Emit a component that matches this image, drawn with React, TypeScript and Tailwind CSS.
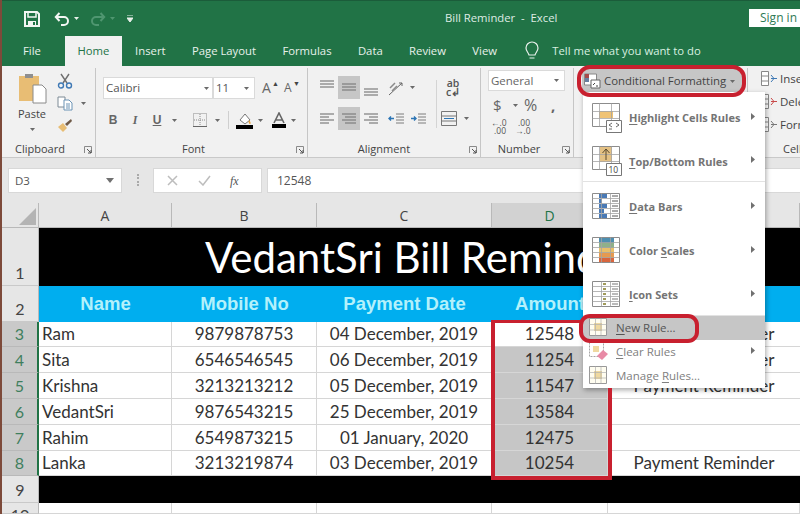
import type { ReactNode } from "react";

const ui = "font-['Open_Sans',sans-serif]";
const sheetFont = "font-['Lato',sans-serif]";

const people = [
  { row: 3, name: "Ram", mobile: "9879878753", date: "04 December, 2019", amount: "12548", note: "Payment Reminder" },
  { row: 4, name: "Sita", mobile: "6546546545", date: "06 December, 2019", amount: "11254", note: "Payment Reminder" },
  { row: 5, name: "Krishna", mobile: "3213213212", date: "05 December, 2019", amount: "11547", note: "Payment Reminder" },
  { row: 6, name: "VedantSri", mobile: "9876543215", date: "25 December, 2019", amount: "13584", note: "" },
  { row: 7, name: "Rahim", mobile: "6549873215", date: "01 January, 2020", amount: "12475", note: "" },
  { row: 8, name: "Lanka", mobile: "3213219874", date: "03 December, 2019", amount: "10254", note: "Payment Reminder" },
];

function Caret({ className = "" }: { className?: string }) {
  return (
    <svg width="5" height="3" viewBox="0 0 5 3" className={`shrink-0 ${className}`}>
      <path d="M0 0h5L2.5 3z" fill="#6a6a6a" />
    </svg>
  );
}

function Chevron() {
  return (
    <svg width="4" height="7" viewBox="0 0 4 7" className="shrink-0 -mt-[4px]">
      <path d="M0 0l4 3.5L0 7z" fill="#707070" />
    </svg>
  );
}

function Expander({ className = "" }: { className?: string }) {
  return (
    <svg width="8" height="8" viewBox="0 0 8 8" className={className}>
      <path d="M.5 7V.5H7.5V7" fill="none" stroke="#8a8a8a" />
      <path d="M3 3l4 4M7 4v3H4" fill="none" stroke="#555" />
    </svg>
  );
}

function Lines({ offs, selected = false, className = "" }: { offs: number[]; selected?: boolean; className?: string }) {
  // the alignment buttons are only a few grey strokes
  return (
    <div className={`flex items-center justify-center w-[22px] h-[23px] ${selected ? "bg-[#c6c6c6]" : ""}`}>
      <svg width="14" height="14" viewBox="0 0 14 14" className={className}>
        {offs.map((o, i) => (
          <path key={i} d={`M${o < 0 ? 0 : o} ${i * 3 + 2}H${o < 0 ? 14 + o : 14}`} stroke="#7c7c7c" strokeWidth="1.2" />
        ))}
      </svg>
    </div>
  );
}

function TitleBar() {
  return (
    <div className="h-[36px] bg-[#217346] border-t border-[#1b5c3a] flex items-center pl-[22px] relative">
      <svg width="16" height="16" viewBox="0 0 16 16">
        <path d="M1 1h12l2 2v12H1z" fill="none" stroke="#f2f6f3" strokeWidth="2" />
        <path d="M4 1h8v5H4z" fill="none" stroke="#f2f6f3" strokeWidth="1.5" />
        <path d="M4 10h8v5H4z" fill="#f2f6f3" />
        <path d="M9 11h2v3H9z" fill="#217346" />
      </svg>
      <svg width="16" height="14" viewBox="0 0 16 14" className="ml-[14px]">
        <path d="M2 5h8a4 4 0 0 1 0 8H7M5.5 1L1.8 5l3.7 4" fill="none" stroke="#f2f6f3" strokeWidth="2" />
      </svg>
      <svg width="5" height="3" viewBox="0 0 5 3" className="ml-[4px]">
        <path d="M0 0h5L2.5 3z" fill="#e8f0ea" />
      </svg>
      <svg width="16" height="14" viewBox="0 0 16 14" className="ml-[11px]">
        <path d="M14 5H6a4 4 0 0 0 0 8h3M10.5 1l3.7 4-3.700 4" fill="none" stroke="#4f9670" strokeWidth="2" />
      </svg>
      <svg width="5" height="3" viewBox="0 0 5 3" className="ml-[4px]">
        <path d="M0 0h5L2.5 3z" fill="#4f9670" />
      </svg>
      <svg width="6" height="7" viewBox="0 0 6 7" className="ml-[12px]">
        <path d="M0 0h6M0 3h6L3 7z" stroke="#e8f0ea" fill="#e8f0ea" />
      </svg>
      <span className={`${ui} ml-[312px] text-[11.3px] text-[#dfece4] whitespace-pre`}>Bill Reminder  -  Excel</span>
      <div className={`${ui} absolute right-0 top-[8px] w-[51px] h-[18px] bg-white text-[#2f7a55] text-[12px] leading-[18px] pl-[11px]`}>
        Sign in
      </div>
    </div>
  );
}

function Tabs() {
  const tabs = ["Insert", "Page Layout", "Formulas", "Data", "Review", "View"];
  return (
    <div className={`${ui} h-[30px] bg-[#217346] flex items-end text-[11.3px] text-[#e8f1eb] pl-[8px]`}>
      <div className="h-[30px] px-[13px] leading-[29px]">File</div>
      <div className="h-[30px] ml-[11px] w-[57px] bg-[#f1f1f1] text-[#217346] text-center leading-[29px]">Home</div>
      {tabs.map((t) => (
        <div key={t} className="h-[30px] px-[13.2px] leading-[29px]">
          {t}
        </div>
      ))}
      <svg width="14" height="20" viewBox="0 0 14 20" className="ml-[15px] mb-[5px]">
        <path d="M4 14C3 11 1 10 1 7a6 6 0 0 1 12 0c0 3-2 4-3 7zM4.5 17h5" fill="none" stroke="#e8f1eb" strokeWidth="1.2" />
      </svg>
      <div className="h-[30px] ml-[13px] leading-[29px] text-[#d8f0e0]">Tell me what you want to do</div>
    </div>
  );
}

function Group({ width, label, labelClass = "", children, expander = true }: { width: string; label: string; labelClass?: string; children: ReactNode; expander?: boolean }) {
  return (
    <div className={`${width} shrink-0 h-[89px] mt-[2px] border-r border-[#c6c6c6] flex flex-col relative`}>
      <div className="flex-1 min-h-0">{children}</div>
      <div className={`h-[16px] flex items-center justify-center text-[11px] text-[#444] ${labelClass}`}>{label}</div>
      {expander && <Expander className="absolute right-[3px] bottom-[3px]" />}
    </div>
  );
}

function Clipboard() {
  return (
    <div className="flex pl-[13px] pt-[5px]">
      <div className="w-[34px] flex flex-col items-center">
        <svg width="29" height="31" viewBox="0 0 29 31">
          <path d="M1 3h20v25H1z" fill="#e8bd74" />
          <path d="M7 1h8v4H7z" fill="#8f8f8f" />
          <path d="M15 12h9l4 4v14H15z" fill="#fff" stroke="#8a8a8a" />
        </svg>
        <span className="text-[11px] text-[#444] mt-[3px] leading-[14px]">Paste</span>
        <Caret className="mt-[7px]" />
      </div>
      <div className="ml-[8px] flex flex-col items-start gap-[7px]">
        <svg width="16" height="16" viewBox="0 0 16 16">
          <path d="M4 1l6 9M12 1L6 10" stroke="#6f6f6f" strokeWidth="1.4" />
          <circle cx="4" cy="12.5" r="2.5" fill="none" stroke="#3f79b5" strokeWidth="1.4" />
          <circle cx="12" cy="12.5" r="2.5" fill="none" stroke="#3f79b5" strokeWidth="1.4" />
        </svg>
        <div className="flex items-center gap-[8px]">
          <svg width="16" height="15" viewBox="0 0 16 15">
            <path d="M1 1h7v10H1z" fill="#fff" stroke="#7c8a95" />
            <path d="M7 4h5l3 3v7H7z" fill="#fff" stroke="#6b93b5" />
            <path d="M9 8h4M9 10h4M9 12h4" stroke="#6b93b5" />
          </svg>
          <Caret />
        </div>
        <svg width="16" height="15" viewBox="0 0 16 15">
          <path d="M1 9l5-4 4 5-4 4z" fill="#e8bd74" />
          <path d="M8 6l6-5 1 2-5 5z" fill="#6f5a48" />
        </svg>
      </div>
    </div>
  );
}

function FontGroup() {
  return (
    <div className="pl-[7px] pt-[9px]">
      <div className="flex items-center">
        <div className="w-[110px] h-[22px] bg-white border border-[#dadada] flex items-center justify-between pl-[2px] pr-[3px] text-[11.5px] text-[#555]">
          Calibri
          <Caret />
        </div>
        <div className="w-[42px] h-[22px] bg-white border border-[#dadada] flex items-center justify-between pl-[2px] pr-[5px] text-[11.5px] text-[#555]">
          11
          <Caret />
        </div>
        <span className="ml-[7px] w-[16px] text-[14px] leading-[22px] text-[#666] relative">
          A<span className="absolute -top-[4px] left-[10px] text-[7px] text-[#444]">▲</span>
        </span>
        <span className="ml-[6px] w-[16px] text-[12px] leading-[22px] text-[#666] relative">
          A<span className="absolute -top-[4px] left-[9px] text-[7px] text-[#444]">▼</span>
        </span>
      </div>
      <div className="flex items-center mt-[12px] h-[18px] text-[12px] text-[#666]">
        <span className="w-[20px] text-center font-bold font-['Liberation_Sans',sans-serif]">B</span>
        <span className="ml-[3px] w-[18px] text-center italic font-bold font-['Liberation_Serif',serif]">I</span>
        <span className="ml-[4px] w-[18px] text-center underline font-bold font-['Liberation_Sans',sans-serif]">U</span>
        <Caret className="ml-[6px]" />
        <svg width="14" height="14" viewBox="0 0 14 14" className="ml-[16px]">
          <path d="M.5.5h13v13H.5zM7 1v12M1 7h12" fill="none" stroke="#8a8a8a" strokeDasharray="1 1" />
          <path d="M0 13.5h14" stroke="#666" />
        </svg>
        <Caret className="ml-[8px]" />
        <div className="w-px h-[18px] bg-[#cfcfcf] ml-[8px]" />
        <svg width="17" height="17" viewBox="0 0 17 17" className="ml-[7px]">
          <path d="M4 8l5-6 5 6-5 4z" fill="#fff" stroke="#777" />
          <path d="M13 8c2 2 2 4 1 4s-2-2-1-4z" fill="#e8a33c" />
          <path d="M0 13h17v4H0z" fill="#000" />
        </svg>
        <Caret className="ml-[5px]" />
        <svg width="14" height="16" viewBox="0 0 14 16" className="ml-[9px]">
          <path d="M2 11L7 1l5 10M4 8h6" fill="none" stroke="#666" strokeWidth="1.6" />
          <path d="M0 12h14v4H0z" fill="#000" />
        </svg>
        <Caret className="ml-[5px]" />
      </div>
    </div>
  );
}

function AlignmentGroup() {
  return (
    <div className="pl-[8px] pt-[8px]">
      <div className="flex items-center h-[23px]">
        <Lines offs={[0, 0, 0]} className="-mt-[3px]" />
        <Lines offs={[0, 0, 0]} selected className="mt-[3px]" />
        <Lines offs={[0, 0, 0]} className="mt-[13px]" />
        <svg width="18" height="16" viewBox="0 0 18 16" className="ml-[6px]">
          <path d="M1 15L14 3M11 3h3v3" fill="none" stroke="#666" />
          <path d="M2 8l5-5M4 11l5-5" stroke="#8b8b8b" strokeWidth="1.5" />
        </svg>
        <Caret className="ml-[4px]" />
        <div className="w-px h-[48px] bg-[#d4d4d4] ml-[21px] -mb-[25px] mt-[7px]" />
        <div className="ml-[9px] text-[10.5px] leading-[9px] text-[#555] text-center font-semibold">
          ab
          <br />
          c↲
        </div>
      </div>
      <div className="flex items-center h-[23px] mt-[8px]">
        <Lines offs={[0, -5, 0, -5]} />
        <Lines offs={[0, 3, 0, 3]} selected />
        <Lines offs={[0, 5, 0, 5]} />
        <svg width="16" height="14" viewBox="0 0 16 14" className="ml-[6px]">
          <path d="M8 2h8M8 5h8M8 8h8M8 11h8" stroke="#7c7c7c" />
          <path d="M6 6.5H1M3 4.5L1 6.5l2 2" fill="none" stroke="#2c75b5" strokeWidth="1.4" />
        </svg>
        <svg width="16" height="14" viewBox="0 0 16 14" className="ml-[6px]">
          <path d="M8 2h8M8 5h8M8 8h8M8 11h8" stroke="#7c7c7c" />
          <path d="M1 6.5h5M4 4.5l2 2-2 2" fill="none" stroke="#2c75b5" strokeWidth="1.4" />
        </svg>
        <svg width="16" height="15" viewBox="0 0 16 15" className="ml-[15px]">
          <path d="M.5.5h15v14H.5zM.5 5h15M.5 10h15" fill="none" stroke="#777" />
          <path d="M3 7.5h10" stroke="#2c75b5" />
        </svg>
        <Caret className="ml-[7px]" />
      </div>
    </div>
  );
}

function NumberGroup() {
  return (
    <div className="pl-[7px] pt-[2px]">
      <div className="w-[77px] h-[21px] bg-white border border-[#dadada] flex items-center justify-between pl-[2px] pr-[5px] text-[11.5px] text-[#666]">
        General
        <Caret />
      </div>
      <div className="flex items-center h-[24px] mt-[2px] pl-[5px] text-[15px] text-[#666]">
        <span className="w-[12px]">$</span>
        <Caret className="ml-[8px]" />
        <span className="ml-[6px] w-[20px] text-[16px]">%</span>
        <span className="ml-[7px] font-bold">,</span>
      </div>
      <div className="flex items-center mt-[2px] pl-[3px] gap-[9px]">
        {[".0", ".00"].map((t, i) => (
          <div key={t} className="w-[15px] text-[8.5px] leading-[8px] text-[#555] text-right">
            {i === 0 ? "←.0" : ".00"}
            <br />
            {i === 0 ? ".00" : "→.0"}
          </div>
        ))}
      </div>
    </div>
  );
}

function CfIcon() {
  return (
    <svg width="17" height="16" viewBox="0 0 17 16">
      <path d="M.5 1h12v11H.5z" fill="#fff" stroke="#888" />
      <path d="M1 1h4v4H1z" fill="#a84a4a" />
      <path d="M1 5h4v4H1z" fill="#667fa0" />
      <path d="M7 7h9v8H7z" fill="#fff" stroke="#666" />
      <path d="M9 12l2-2M12 13h2" stroke="#444" />
    </svg>
  );
}

function StylesGroup() {
  return (
    <div className="relative pl-[8px] -mt-[2px]">
      <div className="flex items-center w-[160px] h-[24px] mt-[3px] bg-[#c6c6c6] pl-[2px] text-[11.4px] text-[#444]">
        <CfIcon />
        <span className="ml-[3px]">Conditional Formatting</span>
        <Caret className="ml-[4px]" />
      </div>
    </div>
  );
}

function CellsGroup() {
  const rows = [
    { t: "Insert", c: "#3f79b5" },
    { t: "Delete", c: "#c94a4a" },
    { t: "Format", c: "#777" },
  ];
  return (
    <div className="pl-[13px] pt-[2px] flex flex-col gap-[6px] text-[11.5px] text-[#444] whitespace-nowrap">
      {rows.map((r) => (
        <div key={r.t} className="flex items-center gap-[2px] h-[17px]">
          <svg width="17" height="15" viewBox="0 0 17 15" className="shrink-0">
            <path d="M.5.5h7v14h-7zM.5 5h7M.5 10h7" fill="#fff" stroke="#888" />
            <path d="M10 7.5h6M10 4l3 3.5L10 11" fill="none" stroke={r.c} />
          </svg>
          {r.t}
        </div>
      ))}
    </div>
  );
}

function Ribbon() {
  return (
    <div className={`${ui} h-[92px] bg-[#f1f1f1] border-b border-[#c9c9c9] flex overflow-hidden`}>
      <Group width="w-[94px]" label="Clipboard" labelClass="justify-start! pl-[13px]">
        <Clipboard />
      </Group>
      <Group width="w-[212px]" label="Font" labelClass="pr-[16px]">
        <FontGroup />
      </Group>
      <Group width="w-[173px]" label="Alignment" labelClass="pr-[20px]">
        <AlignmentGroup />
      </Group>
      <Group width="w-[93px]" label="Number" labelClass="pr-[16px]">
        <NumberGroup />
      </Group>
      <Group width="w-[174px]" label="Styles" expander={false}>
        <StylesGroup />
      </Group>
      <Group width="w-[60px]" label="Cells" expander={false} labelClass="justify-start! pl-[35px]">
        <CellsGroup />
      </Group>
    </div>
  );
}

function FormulaBar() {
  return (
    <div className={`${ui} h-[45px] bg-[#e6e6e6] pl-[6px] flex items-start pt-[10px] text-[11.5px] text-[#555]`}>
      <div className="w-[114px] h-[25px] bg-white border border-[#d8d8d8] flex items-center justify-between pl-[6px] pr-[7px]">
        D3
        <svg width="8" height="5" viewBox="0 0 8 5">
          <path d="M0 0h8L4 5z" fill="#707070" />
        </svg>
      </div>
      <div className="w-[2px] h-[12px] ml-[15px] mt-[6px] border-l-2 border-dotted border-[#aaa]" />
      <div className="ml-[14px] w-[109px] h-[25px] bg-white border border-[#d8d8d8] flex items-center pl-[13px]">
        <svg width="11" height="11" viewBox="0 0 11 11">
          <path d="M1 1l9 9M10 1l-9 9" stroke="#bdbdbd" strokeWidth="1.5" />
        </svg>
        <svg width="13" height="11" viewBox="0 0 13 11" className="ml-[20px]">
          <path d="M1 6l4 4 7-9" fill="none" stroke="#bdbdbd" strokeWidth="1.5" />
        </svg>
        <span className="ml-[19px] italic font-['Liberation_Serif',serif] text-[12px] text-[#555]">fx</span>
      </div>
      <div className="ml-[5px] flex-1 h-[25px] bg-white border-l border-y border-[#d8d8d8] pl-[9px] leading-[23px] text-[12px]">12548</div>
    </div>
  );
}

function ColHead({ label, active = false }: { label: string; active?: boolean }) {
  return (
    <div className={`${ui} flex items-center justify-center text-[14px] border-r border-b border-[#b9b9b9] ${active ? "bg-[#d2d2d2] text-[#217346]" : "bg-[#e6e6e6] text-[#444]"}`}>
      {label}
    </div>
  );
}

function RowHead({ n, active = false }: { n: number; active?: boolean }) {
  return (
    <div className={`${sheetFont} flex justify-center overflow-hidden text-[16px] leading-[24px] border-b ${n === 10 ? "items-start" : "items-end"} ${active ? "bg-[#c9c9c9] text-[#3f7f5e] border-r-2 border-r-[#217346] border-b-[#b9b9b9]" : "bg-[#e6e6e6] text-[#444] border-r border-r-[#b9b9b9] border-b-[#c9c9c9]"}`}>
      {n}
    </div>
  );
}

function Cell({ children, className = "" }: { children?: ReactNode; className?: string }) {
  return <div className={`${sheetFont} flex items-center text-[17px] text-[#333] border-r border-b border-[#d6d6d6] whitespace-nowrap ${className}`}>{children}</div>;
}

function Sheet() {
  return (
    <div className="flex-1 min-h-0 overflow-hidden grid grid-cols-[37px_133px_145px_175px_116px_192px] grid-rows-[25px_58px_36px_25px_26px_26px_26px_26px_25px_27px_11px] bg-white">
      <div className="bg-[#e6e6e6] border-r border-b border-[#b9b9b9] flex items-end justify-end pr-[2px] pb-[2px]">
        <svg width="17" height="17" viewBox="0 0 17 17">
          <path d="M17 0v17H0z" fill="#b4b4b4" />
        </svg>
      </div>
      <ColHead label="A" />
      <ColHead label="B" />
      <ColHead label="C" />
      <ColHead label="D" active />
      <ColHead label="E" />

      <RowHead n={1} />
      <div className={`${sheetFont} col-span-5 bg-black text-white text-[42px] leading-[58px] pl-[166px] whitespace-nowrap overflow-hidden`}>
        VedantSri Bill Reminder
      </div>

      <RowHead n={2} />
      {["Name", "Mobile No", "Payment Date", "Amount", ""].map((h, i) => (
        <div key={i} className="bg-[#00aeef] flex items-center justify-center font-['Liberation_Sans',sans-serif] font-bold text-[18.5px] text-[#b4f1fb]">
          {h}
        </div>
      ))}

      {people.map((p) => (
        <div key={p.row} className="contents">
          <RowHead n={p.row} active />
          <Cell className="pl-[3px]">{p.name}</Cell>
          <Cell className="justify-center">{p.mobile}</Cell>
          <Cell className="justify-center">{p.date}</Cell>
          <Cell className={`justify-center ${p.row > 3 ? "bg-[#c6c6c6] border-[#b4b4b4]" : ""}`}>{p.amount}</Cell>
          <Cell className="justify-center border-r-0">{p.note}</Cell>
        </div>
      ))}

      <RowHead n={9} />
      <div className="col-span-5 bg-black" />

      <RowHead n={10} />
      <Cell />
      <Cell />
      <Cell />
      <Cell />
      <Cell />
    </div>
  );
}

function GridIcon({ children }: { children: ReactNode }) {
  return (
    <svg width="28" height="26" viewBox="0 0 28 26" className="shrink-0 -mt-[3px]">
      <path d="M.5.5h27v25H.5z" fill="#fff" stroke="#8c8c8c" />
      {children}
      <path d="M9.5.5v25M18.5.5v25M.5 5.5h27M.5 10.5h27M.5 15.5h27M.5 20.5h27" fill="none" stroke="#a5a5a5" strokeWidth=".8" />
    </svg>
  );
}

function SmallGrid() {
  return (
    <svg width="20" height="20" viewBox="0 0 20 20" className="shrink-0">
      <path d="M.5.5h17v17H.5z" fill="#fffdf0" stroke="#999" />
      <path d="M5 5h8v8H5z" fill="#efd9a0" />
      <path d="M6.5.5v17M12 .5v17M.5 6.5h17M.5 12h17" stroke="#b0b0b0" strokeWidth=".7" fill="none" />
    </svg>
  );
}

function BigItem({ icon, label, className = "" }: { icon: ReactNode; label: ReactNode; className?: string }) {
  return (
    <div className={`flex items-center h-[44px] pl-[9px] pr-[10px] ${className}`}>
      {icon}
      <span className="flex-1 ml-[9px] mt-[1px] text-[11px] font-bold text-[#747474] whitespace-nowrap">{label}</span>
      <Chevron />
    </div>
  );
}

function CfMenu() {
  const u = "underline underline-offset-2";
  return (
    <div className={`${ui} absolute left-[583px] top-[92px] w-[182px] h-[296px] bg-white shadow-[1px_2px_5px_rgba(0,0,0,0.35)] pt-[4px]`}>
      <BigItem
        label={<><span className={u}>H</span>ighlight Cells Rules</>}
        icon={
          <svg width="30" height="30" viewBox="0 0 30 30" className="shrink-0 -mt-[1px] -mr-[2px]">
            <path d="M.5.5h27v23H.5z" fill="#fff" stroke="#8c8c8c" />
            <path d="M7 8h14v7H7z" fill="#f0c374" />
            <path d="M7.5.5v23M19.5.5v23M.5 8.5h27M.5 15.5h27" fill="none" stroke="#a5a5a5" strokeWidth=".8" />
            <path d="M14.5 17.5h15v12h-15z" fill="#fff" stroke="#777" />
            <path d="M20 20l-3 2 3 2M17 26h3M24 20l3 2-3 2" fill="none" stroke="#444" strokeWidth=".8" />
          </svg>
        }
      />
      <BigItem
        className="border-b border-[#e2e2e2] h-[42px]! mb-[3px] pt-[2px]"
        label={<><span className={u}>T</span>op/Bottom Rules</>}
        icon={
          <svg width="30" height="30" viewBox="0 0 30 30" className="shrink-0 -mt-[1px] -mr-[2px]">
            <path d="M.5.5h27v23H.5z" fill="#fff" stroke="#8c8c8c" />
            <path d="M8 1h12v15H8z" fill="#e4c184" />
            <path d="M7.5.5v23M19.5.5v23M.5 8.5h27M.5 15.5h27" fill="none" stroke="#a5a5a5" strokeWidth=".8" />
            <path d="M14 14V3M10.5 7L14 3l3.5 4" fill="none" stroke="#5a4a30" />
            <path d="M14.5 17.5h15v12h-15z" fill="#fff" stroke="#777" />
            <text x="16.5" y="27" fontSize="8.5" fill="#444">10</text>
          </svg>
        }
      />
      <BigItem
        label={<><span className={u}>D</span>ata Bars</>}
        icon={
          <GridIcon>
            <path d="M7 1h8v4H7zM7 11h8v4H7zM7 21h8v4H7z" fill="#4a7ab5" />
            <path d="M7 6h3v4H7zM7 16h5v4H7z" fill="#4a7ab5" />
            <path d="M20 3h6M20 8h6M20 13h6M20 18h6M20 23h6" stroke="#555" />
          </GridIcon>
        }
      />
      <BigItem
        label={<>Color <span className={u}>S</span>cales</>}
        icon={
          <GridIcon>
            <path d="M7 1h15v5H7z" fill="#4f8fb0" />
            <path d="M7 6h15v5H7z" fill="#8fb08a" />
            <path d="M7 11h15v5H7z" fill="#e8c06a" />
            <path d="M7 16h15v5H7z" fill="#e69a50" />
            <path d="M7 21h15v4H7z" fill="#d9663e" />
          </GridIcon>
        }
      />
      <BigItem
        className="border-b border-[#e2e2e2] h-[43px]! pt-[2px]"
        label={<><span className={u}>I</span>con Sets</>}
        icon={
          <GridIcon>
            <path d="M11 2h3v2h-3zM11 7h3v2h-3zM11 12h3v2h-3zM11 17h3v2h-3zM11 22h3v2h-3z" fill="#a09a5a" />
            <path d="M20 3h6M20 8h6M20 13h6M20 18h6M20 23h6" stroke="#777" />
          </GridIcon>
        }
      />
      <div className="h-[24px] bg-[#c6c6c6] flex items-center pl-[6px] text-[11.5px] text-[#555]">
        <SmallGrid />
        <span className="ml-[7px]"><span className={u}>N</span>ew Rule...</span>
      </div>
      <div className="h-[24px] flex items-center pl-[6px] pr-[10px] text-[11.5px] text-[#808080]">
        <svg width="20" height="20" viewBox="0 0 20 20" className="shrink-0">
          <path d="M.5.5h14v14H.5z" fill="#fff" stroke="#a5a5a5" strokeDasharray="2 1" />
          <path d="M4 4h6v6H4z" fill="#efd9a0" />
          <path d="M8 14l6-6 5 4-6 6z" fill="#e88aa6" />
        </svg>
        <span className="ml-[7px] flex-1"><span className={u}>C</span>lear Rules</span>
        <Chevron />
      </div>
      <div className="h-[24px] flex items-center pl-[6px] text-[11.5px] text-[#808080]">
        <SmallGrid />
        <span className="ml-[7px]">Manage <span className={u}>R</span>ules...</span>
      </div>
    </div>
  );
}

function Annotations() {
  return (
    <>
      {/* red marker strokes drawn on top of the screenshot */}
      <div className="absolute left-[577px] top-[65px] w-[169px] h-[32px] rounded-[13px] border-[4px] border-[#c8202f]" />
      <div className="absolute left-[579px] top-[314px] w-[120px] h-[29px] rounded-[11px] border-[4px] border-[#c8202f]" />
      <div className="absolute left-[491px] top-[320px] w-[4px] h-[160px] bg-[#c8202f]" />
      <div className="absolute left-[491px] top-[320px] w-[90px] h-[3px] bg-[#c8202f]" />
      <div className="absolute left-[491px] top-[476px] w-[120px] h-[4px] bg-[#c8202f]" />
      <div className="absolute left-[608px] top-[388px] w-[4px] h-[92px] bg-[#c8202f]" />
    </>
  );
}

export default function App() {
  return (
    <div className="relative w-[800px] h-[514px] overflow-hidden flex bg-white">
      <div className="w-[2px] shrink-0 bg-[#7d4a3a]" />
      <div className="flex-1 min-w-0 flex flex-col">
        <TitleBar />
        <Tabs />
        <Ribbon />
        <FormulaBar />
        <Sheet />
      </div>
      <CfMenu />
      <Annotations />
    </div>
  );
}
